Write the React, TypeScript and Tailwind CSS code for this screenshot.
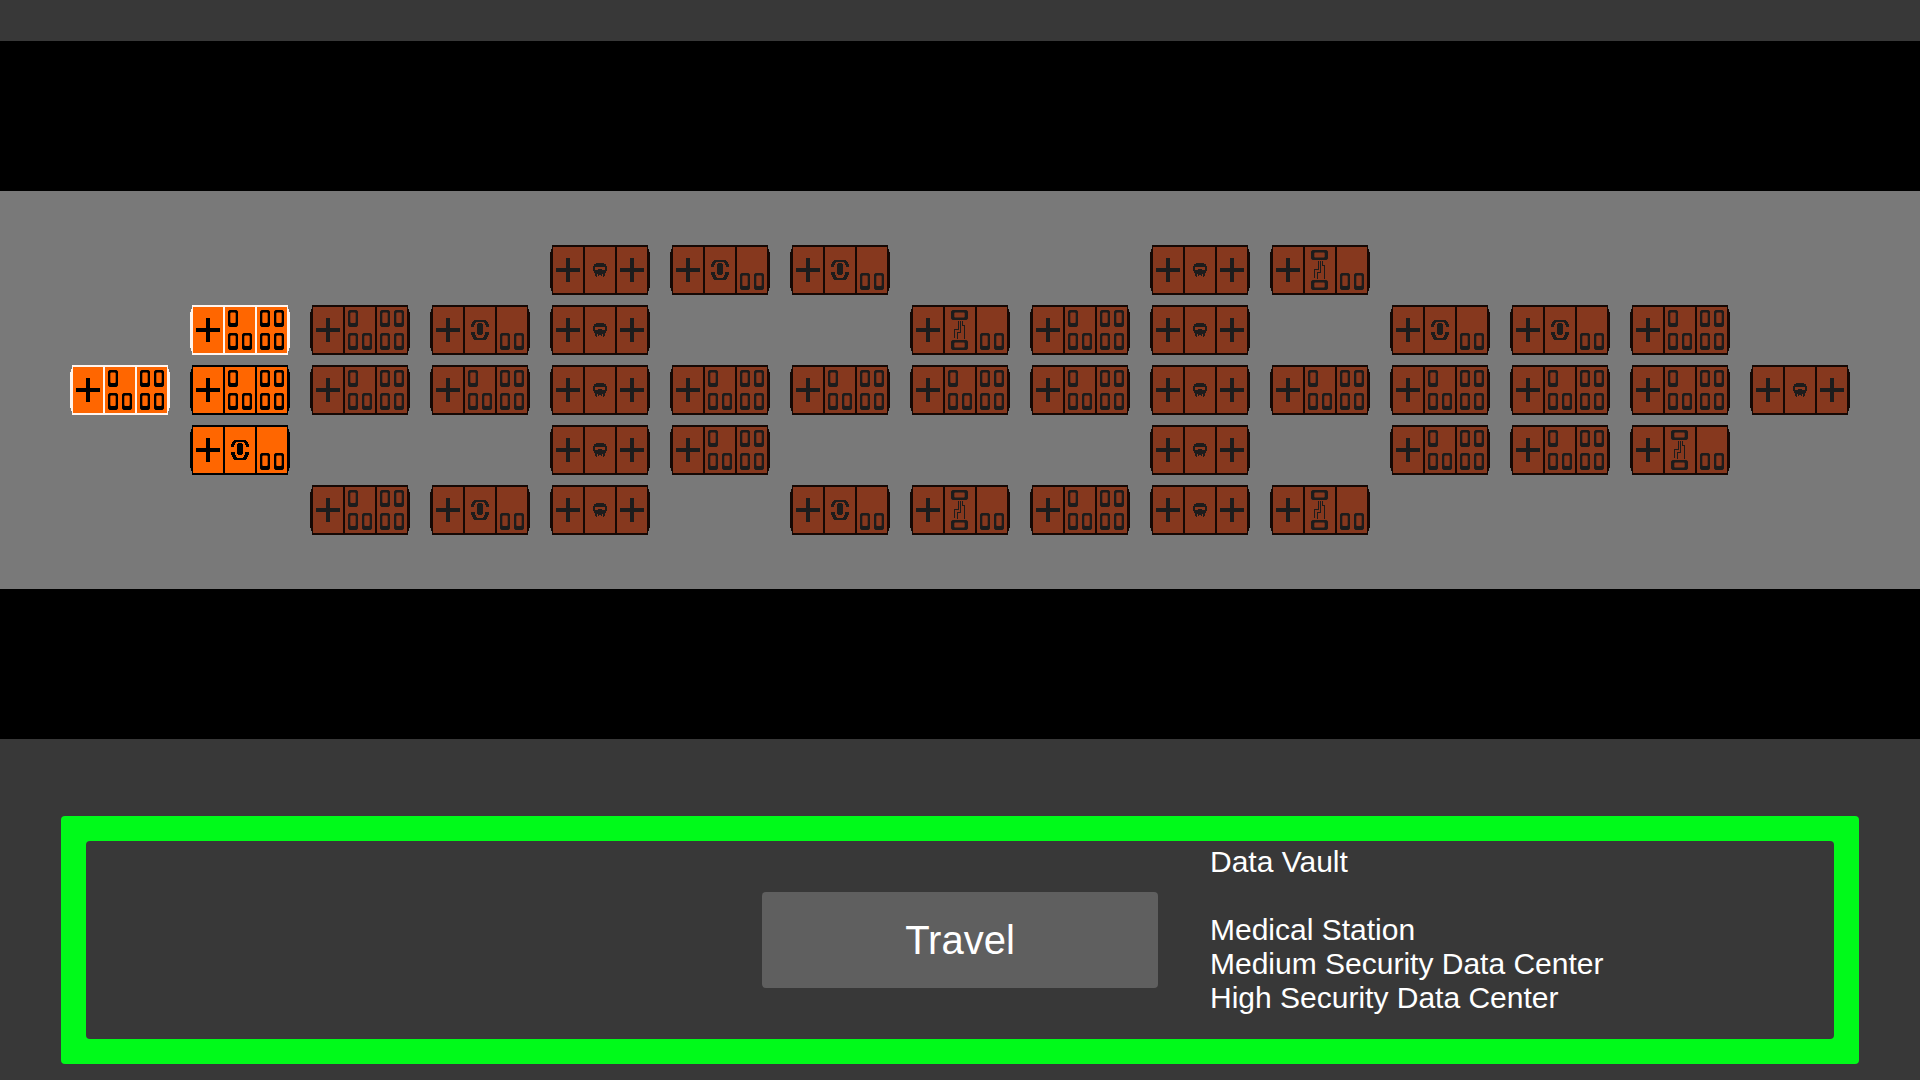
type RoomKind = "data" | "medical" | "hostile" | "vault";
type NodeState = "visited" | "open" | "locked";

const KINDS: Record<string, RoomKind> = {
  D: "data",
  M: "medical",
  H: "hostile",
  V: "vault",
};

// one letter per column, "." is an empty slot
const SECTOR_MAP = [
  "....HMM..HV....",
  ".DDMH..VDH.MMD.",
  "DDDDHDDDDHDDDDH",
  ".M..HD...H.DDV.",
  "..DMH.MVDHV....",
];

const VISITED = ["1-1", "2-0"];
const OPEN = ["2-1", "3-1"];

const PALETTE: Record<NodeState, { frame: string; cell: string; glyph: string }> = {
  visited: { frame: "fill-[#fff4ee]", cell: "fill-[#ff6600]", glyph: "fill-black" },
  open: { frame: "fill-black", cell: "fill-[#ff6600]", glyph: "fill-black" },
  locked: { frame: "fill-[#160804]", cell: "fill-[#86381e]", glyph: "fill-[#1d1c1c]" },
};

const STATIONS = ["Medical Station", "Medium Security Data Center", "High Security Data Center"];

function Plus({ x }: { x: number }) {
  return <path d={`M${x + 10} 13h4v10h10v4h-10v10h-4v-10h-10v-4h10z`} />;
}

function Server({ x, y }: { x: number; y: number }) {
  return (
    <path
      fillRule="evenodd"
      shapeRendering="geometricPrecision"
      d={`M${x + 1.5} ${y}h7l1.5 1.5v14l-1.5 1.5h-7l-1.5 -1.5v-14zM${x + 3} ${y + 2.5}l-.7 .7v9l.7 .7h4l.7 -.7v-9l-.7 -.7z`}
    />
  );
}

function Drive({ y }: { y: number }) {
  return (
    <path
      fillRule="evenodd"
      shapeRendering="geometricPrecision"
      d={`M42.5 ${y}h14l1.5 1.5v7l-1.5 1.5h-14l-1.5 -1.5v-7zM45 ${y + 2.4}l-.7 .7v3.8l.7 .7h9l.7 -.7v-3.8l-.7 -.7z`}
    />
  );
}

function Medical() {
  return (
    <path d="M48 18h4v1h1v10h-1v1h-4v-1h-1v-10h1zM44 15h12v1h1v1h1v2h1v3h-3v-2h-1v-2h-1v-1h-8v1h-1v2h-1v2h-3v-3h1v-2h1v-1h1zM41 27h4v3h1v2h1v1h6v-1h1v-2h1v-3h4v3h-1v2h-1v2h-1v1h-12v-1h-1v-2h-1v-2h-1z" />
  );
}

function Skull() {
  return (
    <path
      fillRule="evenodd"
      d="M46 18h8v1h2v2h1v5h-1v2h-1v3h-1v1h-1v-3h-1v2h-1v-1h-2v1h-1v-2h-1v3h-1v-1h-1v-3h-1v-2h-1v-5h1v-2h2zM45 22v3h3v-1h4v1h3v-3z"
    />
  );
}

function Circuit() {
  return <path d="M48 16h1v9h-4v8h-1v-9h4zM50 16h1v12h-3v6h-1v-7h3zM52 16h1v4h2v14h-1v-13h-2z" />;
}

function RoomGlyphs({ kind }: { kind: RoomKind }) {
  if (kind === "hostile") {
    return (
      <>
        <Skull />
        <Plus x={70} />
      </>
    );
  }
  if (kind === "data") {
    return (
      <>
        <Server x={38} y={5} />
        <Server x={38} y={28} />
        <Server x={52} y={28} />
        <Server x={70} y={5} />
        <Server x={84} y={5} />
        <Server x={70} y={28} />
        <Server x={84} y={28} />
      </>
    );
  }
  return (
    <>
      {kind === "medical" ? (
        <Medical />
      ) : (
        <>
          <Drive y={5} />
          <Circuit />
          <Drive y={35} />
        </>
      )}
      <Server x={70} y={28} />
      <Server x={84} y={28} />
    </>
  );
}

function MapNode({ kind, state }: { kind: RoomKind; state: NodeState }) {
  const colors = PALETTE[state];
  return (
    <button type="button" aria-label={`${kind} sector`} disabled={state === "locked"} className="block">
      <svg viewBox="0 0 100 50" className="block w-full" shapeRendering="crispEdges" aria-hidden="true">
        <path className={colors.frame} d="M2 0H98V4H99V7H100V43H99V46H98V50H2V46H1V43H0V7H1V4H2z" />
        <path className={colors.cell} d="M3 2h30v46h-30zM35 2h30v46h-30zM67 2h30v46h-30z" />
        <g className={colors.glyph}>
          <Plus x={6} />
          <RoomGlyphs kind={kind} />
        </g>
      </svg>
    </button>
  );
}

function getState(id: string): NodeState {
  if (VISITED.includes(id)) return "visited";
  return OPEN.includes(id) ? "open" : "locked";
}

export default function App() {
  return (
    <div className="flex min-h-screen flex-col bg-[#383838] font-['Liberation_Sans',Arial,sans-serif] text-white">
      <main className="mt-[41px] bg-black py-[150px]">
        <div className="grid grid-cols-[repeat(15,minmax(0,1fr))] gap-x-5 gap-y-[10px] bg-[#797979] px-[70px] py-[54px]">
          {SECTOR_MAP.map((row, r) =>
            row.split("").map((cell, c) => {
              const id = `${r}-${c}`;
              return cell === "." ? (
                <div key={id} />
              ) : (
                <MapNode key={id} kind={KINDS[cell]} state={getState(id)} />
              );
            })
          )}
        </div>
      </main>

      <footer className="px-[61px] pt-[77px] pb-4">
        <div className="rounded bg-[#00fa1a] p-[25px]">
          <div className="grid min-h-[198px] grid-cols-[1fr_396px_1fr] gap-x-[52px] rounded bg-[#383838]">
            <button
              type="button"
              className="col-start-2 h-24 self-center rounded bg-[#5f5f5f] text-[40px] leading-none"
            >
              Travel
            </button>
            <div className="pt-1 text-[30px] leading-[34px]">
              <h2 className="mb-[34px]">Data Vault</h2>
              <ul>
                {STATIONS.map((station) => (
                  <li key={station}>{station}</li>
                ))}
              </ul>
            </div>
          </div>
        </div>
      </footer>
    </div>
  );
}
